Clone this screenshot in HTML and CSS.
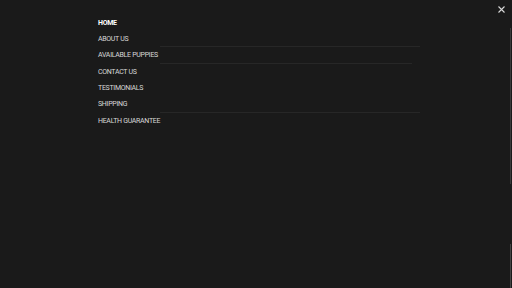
FILE: index.html
```html
<!DOCTYPE html>
<html lang="en">
<head>
<meta charset="utf-8">
<title>Menu</title>
<link rel="stylesheet" href="styles.css">
</head>
<body>
<div class="overlay">
  <button class="close" aria-label="Close">
    <svg width="7" height="7" viewBox="0 0 7 7"><path d="M0.5 0.5 L6.5 6.5 M6.5 0.5 L0.5 6.5" stroke="#d8d8d8" stroke-width="1.1" fill="none"/></svg>
  </button>
  <nav class="menu">
    <a class="item active" href="#">HOME</a>
    <a class="item" href="#">ABOUT US</a>
    <a class="item sep" href="#">AVAILABLE PUPPIES</a>
    <a class="item sep short" href="#">CONTACT US</a>
    <a class="item" href="#">TESTIMONIALS</a>
    <a class="item" href="#">SHIPPING</a>
    <a class="item sep" href="#">HEALTH GUARANTEE</a>
  </nav>
  <div class="edge edge-top"></div>
  <div class="edge edge-bottom"></div>
</div>
</body>
</html>
```
FILE: styles.css
```css
html, body {
  margin: 0;
  padding: 0;
  background: #1a1a1a;
  height: 100%;
}
.overlay {
  position: relative;
  width: 512px;
  height: 288px;
  background: #1a1a1a;
  font-family: Roboto, "Liberation Sans", sans-serif;
  overflow: hidden;
}
.close {
  position: absolute;
  top: 5px;
  right: 6px;
  width: 9px;
  height: 9px;
  padding: 1px;
  border: 0;
  background: none;
  display: flex;
  align-items: center;
  justify-content: center;
}
.menu {
  display: flex;
  flex-direction: column;
  padding: 14.5px 0 0 98px;
  width: 322px;
}
.item {
  position: relative;
  display: block;
  height: 16.35px;
  line-height: 16.35px;
  font-size: 7px;
  color: #d8d8d8;
  text-decoration: none;
  letter-spacing: -0.3px;
}
.item.active {
  color: #ffffff;
  font-weight: 700;
}
.item.sep::before {
  content: "";
  position: absolute;
  left: 62px;
  right: 0;
  top: -1px;
  height: 1px;
  background: #272727;
}
.item.short::before {
  right: 8px;
}
.edge {
  position: absolute;
  right: 1px;
  width: 1px;
  background: #3a3a3a;
}
.edge-top {
  top: 28px;
  height: 156px;
}
.edge-bottom {
  top: 244px;
  bottom: 0;
  background: #444;
}
```
